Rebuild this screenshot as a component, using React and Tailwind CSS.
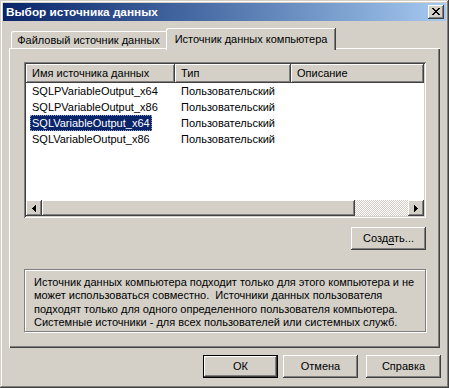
import React from "react";

const raised =
  "shadow-[inset_-1px_-1px_0_#404040,inset_1px_1px_0_#ffffff,inset_-2px_-2px_0_#808080]";

function Btn({ children, def, className = "" }) {
  if (def) {
    return (
      <div className={"w-[75px] h-[23px] border border-black " + className}>
        <div className={"w-full h-full flex items-center justify-center bg-[#d4d0c8] " + raised}>
          {children}
        </div>
      </div>
    );
  }
  return (
    <div className={"w-[75px] h-[23px] flex items-center justify-center bg-[#d4d0c8] " + raised + " " + className}>
      {children}
    </div>
  );
}

function Arrow({ dir }) {
  const d =
    dir === "left"
      ? "M0 3h1v1H0z M1 2h1v3H1z M2 1h1v5H2z M3 0h1v7H3z"
      : "M3 3h1v1H3z M2 2h1v3H2z M1 1h1v5H1z M0 0h1v7H0z";
  return (
    <svg width="4" height="7" viewBox="0 0 4 7" shapeRendering="crispEdges">
      <path d={d} fill="#000" />
    </svg>
  );
}

const rows = [
  ["SQLPVariableOutput_x64", "Пользовательский"],
  ["SQLPVariableOutput_x86", "Пользовательский"],
  ["SQLVariableOutput_x64", "Пользовательский", true],
  ["SQLVariableOutput_x86", "Пользовательский"],
];

export default function App() {
  return (
    <div
      className="w-[449px] h-[388px] bg-[#d4d0c8] p-[3px] flex flex-col text-black text-[11px] font-['Liberation_Sans',Arial,sans-serif] shadow-[inset_-1px_-1px_0_#404040,inset_1px_1px_0_#d4d0c8,inset_-2px_-2px_0_#808080,inset_2px_2px_0_#ffffff] select-none"
    >
      {/* Title bar */}
      <div className="h-[18px] flex items-center justify-between bg-gradient-to-r from-[#0a246a] to-[#a6caf0] pl-[3px] pr-[2px]">
        <span className="text-white font-bold text-[11.8px] leading-[18px] whitespace-nowrap">
          Выбор источника данных
        </span>
        <div className={"w-[16px] h-[14px] flex items-center justify-center bg-[#d4d0c8] " + raised}>
          <svg width="8" height="7" viewBox="0 0 8 7" shapeRendering="crispEdges" className="ml-[-1px] mt-[-1px]">
            <path
              fill="#000"
              d="M0 0h2v1H0z M6 0h2v1H6z M1 1h2v1H1z M5 1h2v1H5z M2 2h4v1H2z M3 3h2v1H3z M2 4h4v1H2z M1 5h2v1H1z M5 5h2v1H5z M0 6h2v1H0z M6 6h2v1H6z"
            />
          </svg>
        </div>
      </div>

      {/* Content */}
      <div className="pl-[6px] pr-[6px] pt-[7px] flex flex-col">
        {/* Tabs */}
        <div className="h-[20px] flex items-end pl-[2px]">
          <div className="w-[155px] h-[17px] flex items-start justify-center pt-[3px] leading-[13px] whitespace-nowrap shadow-[inset_1px_1px_0_#ffffff] rounded-tl-[2px]">
            Файловый источник данных
          </div>
          <div className="relative z-10 -mb-[2px] w-[170px] h-[22px] flex items-start justify-center pt-[5px] leading-[13px] whitespace-nowrap bg-[#d4d0c8] shadow-[inset_-1px_0_0_#404040,inset_1px_1px_0_#ffffff,inset_-2px_0_0_#808080] rounded-tl-[2px]">
            Источник данных компьютера
          </div>
        </div>

        {/* Panel */}
        <div className="h-[300px] flex flex-col pl-[15px] pr-[14px] pt-[14px] shadow-[inset_1px_1px_0_#ffffff,inset_-1px_-1px_0_#404040,inset_-2px_-2px_0_#808080]">
          {/* List view */}
          <div className="h-[156px] p-[2px] bg-white flex flex-col shadow-[inset_1px_1px_0_#808080,inset_-1px_-1px_0_#ffffff,inset_2px_2px_0_#404040,inset_-2px_-2px_0_#d4d0c8]">
            <div className="h-[19px] flex bg-[#d4d0c8]">
              {[
                ["Имя источника данных", "w-[149px]"],
                ["Тип", "w-[116px]"],
                ["Описание", "flex-1"],
              ].map(([t, w]) => (
                <div
                  key={t}
                  className={w + " h-full flex items-center pl-[6px] whitespace-nowrap " + raised}
                >
                  {t}
                </div>
              ))}
            </div>
            <div className="flex-1 flex flex-col">
              {rows.map(([n, t, sel]) => (
                <div key={n} className="h-[16px] flex items-center">
                  <div className="w-[149px] pl-[4px] flex">
                    <span
                      className={
                        "px-[2px] h-[16px] leading-[16px] whitespace-nowrap " +
                        (sel
                          ? "bg-[#0a246a] text-white outline outline-1 outline-dotted outline-[#8c9cc4] -outline-offset-1"
                          : "")
                      }
                    >
                      {n}
                    </span>
                  </div>
                  <div className="w-[116px] pl-[6px] whitespace-nowrap leading-[16px]">{t}</div>
                </div>
              ))}
            </div>
            {/* Horizontal scrollbar */}
            <div className="h-[16px] flex">
              <div className={"w-[16px] h-full flex items-center justify-center bg-[#d4d0c8] " + raised}>
                <div className="ml-[-1px]"><Arrow dir="left" /></div>
              </div>
              <div className={"w-[313px] h-full bg-[#d4d0c8] " + raised}></div>
              <div className="flex-1 h-full bg-[conic-gradient(#ffffff_25%,#d4d0c8_0_50%,#ffffff_0_75%,#d4d0c8_0)] bg-[length:2px_2px]"></div>
              <div className={"w-[16px] h-full flex items-center justify-center bg-[#d4d0c8] " + raised}>
                <Arrow dir="right" />
              </div>
            </div>
          </div>

          {/* Create button */}
          <div className="mt-[9px] flex justify-end">
            <Btn>
              <span className="whitespace-nowrap">
                Созд<span className="underline underline-offset-2">а</span>ть...
              </span>
            </Btn>
          </div>

          {/* Info box */}
          <div className="mt-[19px] h-[63px] pl-[9px] pt-[6px] leading-[13.33px] whitespace-nowrap border border-[#808080] shadow-[inset_1px_1px_0_#ffffff,1px_1px_0_#ffffff]">
            Источник данных компьютера подходит только для этого компьютера и не
            <br />
            может использоваться совместно.&nbsp; Источники данных пользователя
            <br />
            подходят только для одного определенного пользователя компьютера.
            <br />
            Системные источники - для всех пользователей или системных служб.
          </div>
        </div>
      </div>

      {/* Bottom buttons */}
      <div className="mt-[7px] flex justify-end pr-[5px]">
        <Btn def>ОК</Btn>
        <Btn className="ml-[5px]">Отмена</Btn>
        <Btn className="ml-[8px]">Справка</Btn>
      </div>
    </div>
  );
}
